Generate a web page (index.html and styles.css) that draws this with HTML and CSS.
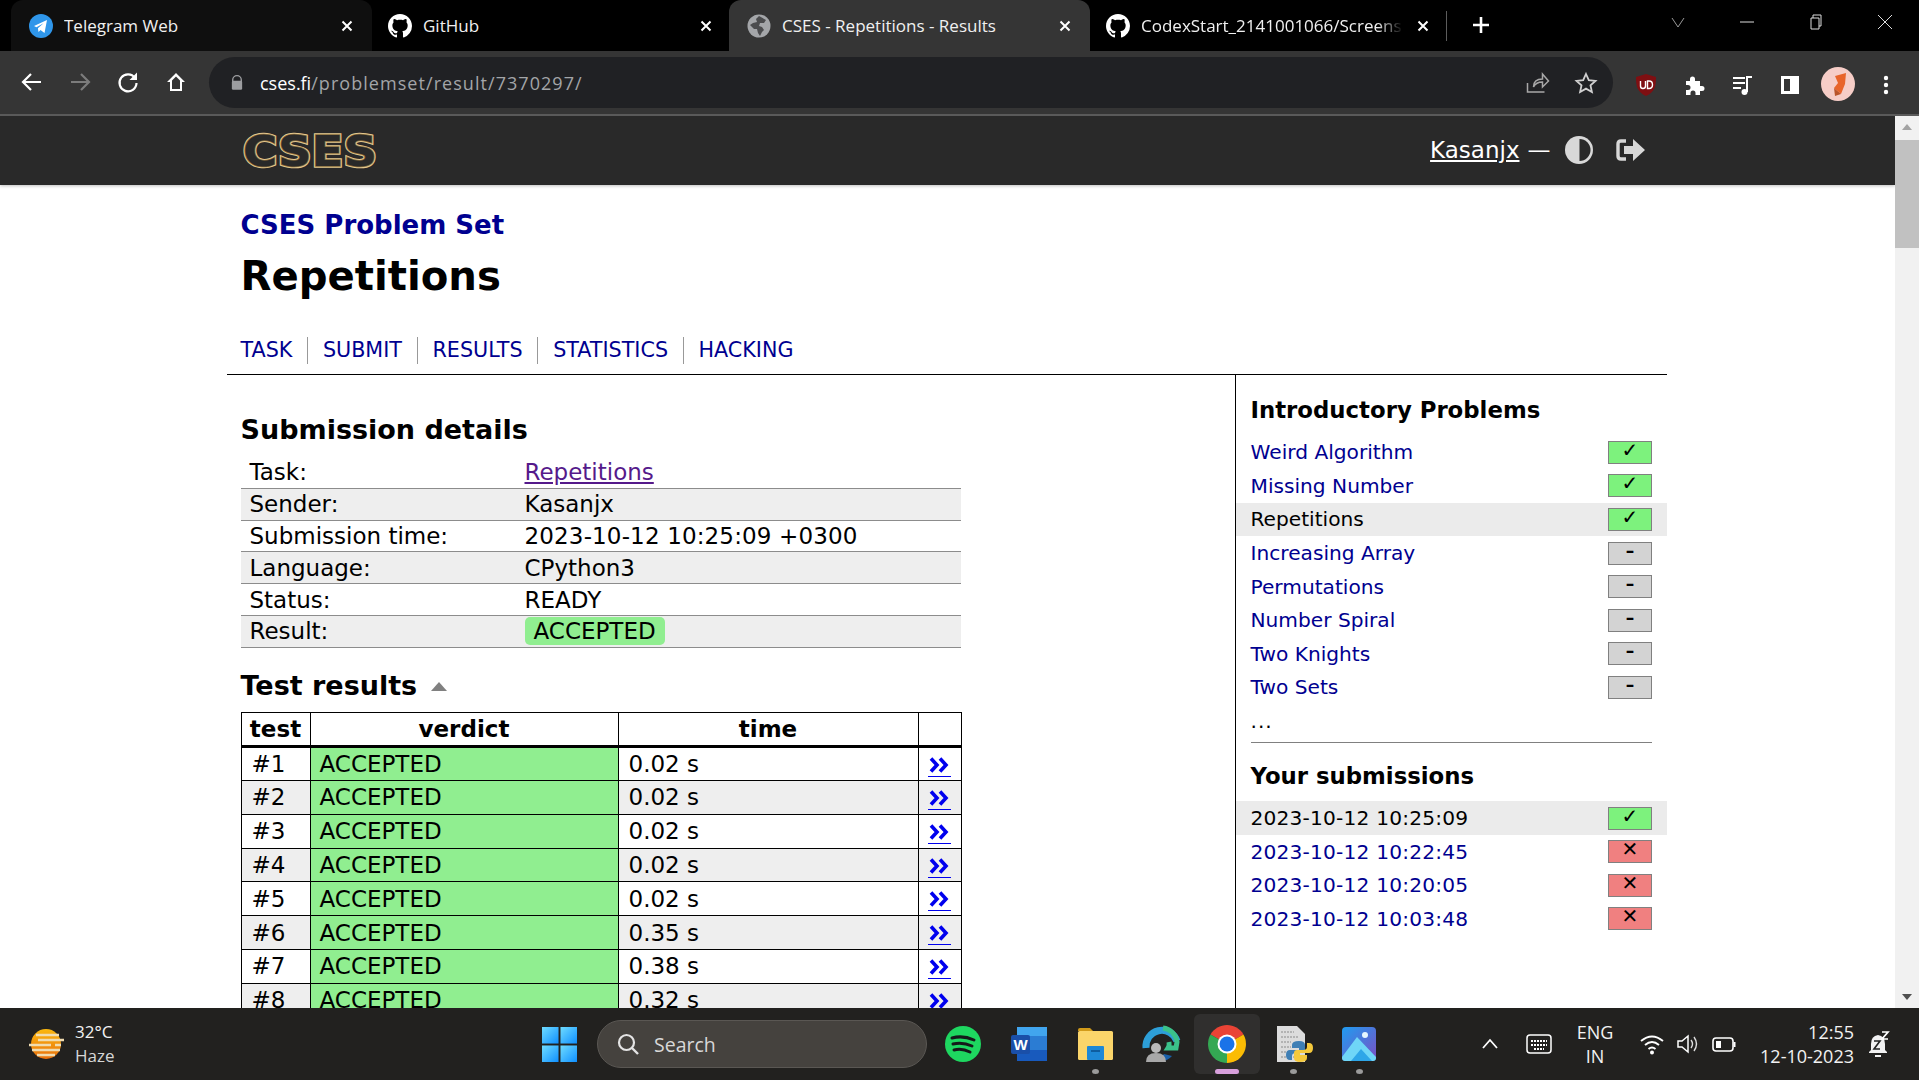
FILE: index.html
```html
<!DOCTYPE html>
<html lang="en">
<head>
    <meta charset="UTF-8">
    <title>CSES - Repetitions - Results</title>
    <link rel="stylesheet" href="styles.css">
</head>
<body>
    <svg class="defs" width="0" height="0">
        <symbol id="github" viewBox="0 0 16 16"><path fill-rule="evenodd" d="M8 0C3.58 0 0 3.58 0 8c0 3.54 2.29 6.53 5.47 7.59.4.07.55-.17.55-.38 0-.19-.01-.82-.01-1.49-2.01.37-2.53-.49-2.69-.94-.09-.23-.48-.94-.82-1.13-.28-.15-.68-.52-.01-.53.63-.01 1.08.58 1.23.82.72 1.21 1.87.87 2.33.66.07-.52.28-.87.51-1.07-1.78-.2-3.64-.89-3.64-3.95 0-.87.31-1.59.82-2.15-.08-.2-.36-1.02.08-2.12 0 0 .67-.21 2.2.82.64-.18 1.32-.27 2-.27.68 0 1.36.09 2 .27 1.53-1.04 2.2-.82 2.2-.82.44 1.1.16 1.92.08 2.12.51.56.82 1.27.82 2.15 0 3.07-1.87 3.75-3.65 3.95.29.25.54.73.54 1.48 0 1.07-.01 1.93-.01 2.2 0 .21.15.46.55.38A8.013 8.013 0 0016 8c0-4.42-3.58-8-8-8z"/></symbol>
        <symbol id="close" viewBox="0 0 12 12"><path d="M1.5 1.5l9 9M10.5 1.5l-9 9" stroke="currentColor" stroke-width="2" fill="none"/></symbol>
        <symbol id="chevrons" viewBox="0 0 23 16"><path d="M3 1.500l6 6.500-6 6.500M12 1.500l6 6.500-6 6.500" stroke="currentColor" stroke-width="3.600" fill="none"/></symbol>
    </svg>

    <div class="tabstrip">
        <div class="tab tab-hover">
            <svg class="favicon" viewBox="0 0 24 24"><circle cx="12" cy="12" r="12" fill="#2f96ea"/><path d="M5 12l13-6-2.5 13-4-3-2 2-.6-3.8 5.6-5-7 4z" fill="#fff"/></svg>
            <span class="tab-title">Telegram Web</span>
            <svg class="tab-close"><use href="#close"/></svg>
        </div>
        <div class="tab tab-second">
            <svg class="favicon favicon-light"><use href="#github"/></svg>
            <span class="tab-title">GitHub</span>
            <svg class="tab-close"><use href="#close"/></svg>
        </div>
        <div class="tab tab-active">
            <svg class="favicon" viewBox="0 0 24 24"><circle cx="12" cy="12" r="11.5" fill="#a4a6a9"/><path d="M12 2l-3 3 1 3-4 1-3 2 4 4 3 0 1 4 2 3 2-4 2-2-2-3-3-1 1-3 4 0 2-3z" fill="#4b4c4e"/></svg>
            <span class="tab-title">CSES - Repetitions - Results</span>
            <svg class="tab-close"><use href="#close"/></svg>
        </div>
        <div class="tab tab-last">
            <svg class="favicon favicon-light"><use href="#github"/></svg>
            <span class="tab-title tab-fade">CodexStart_2141001066/Screens</span>
            <svg class="tab-close"><use href="#close"/></svg>
        </div>
        <div class="tab-sep"></div>
        <svg class="new-tab" viewBox="0 0 18 18"><path d="M9 1v16M1 9h16" stroke="#fff" stroke-width="2.6"/></svg>
        <div class="window-btns">
            <svg viewBox="0 0 16 16"><path d="M2 4l6 9 6-9" stroke="#9a9a9a" fill="none"/></svg>
            <svg viewBox="0 0 16 16"><path d="M1 8h14" stroke="#ddd" fill="none"/></svg>
            <svg viewBox="0 0 16 16"><path d="M3 4h8v11H3zM5 4V1h8v11h-2" stroke="#ddd" fill="none"/></svg>
            <svg viewBox="0 0 16 16"><path d="M1 1l14 14M15 1L1 15" stroke="#ddd" fill="none"/></svg>
        </div>
    </div>

    <div class="toolbar">
        <div class="nav-btns">
            <svg viewBox="0 0 24 24"><path d="M21 12H4M11 4l-8 8 8 8" stroke="#fff" stroke-width="2.2" fill="none"/></svg>
            <svg viewBox="0 0 24 24"><path d="M3 12h17M13 4l8 8-8 8" stroke="#7c7c7c" stroke-width="2.2" fill="none"/></svg>
            <svg viewBox="0 0 24 24"><path d="M19 8a8.5 8.5 0 1 0 1.5 5" stroke="#fff" stroke-width="2.2" fill="none"/><path d="M21 2.5V10h-7.5z" fill="#fff"/></svg>
            <svg viewBox="0 0 24 24"><path d="M12 3L3 12h3v9h12v-9h3zM8 19v-8.500l4-4 4 4V19z" fill="#fff"/></svg>
        </div>
        <div class="omnibox">
            <svg class="lock" viewBox="0 0 14 18"><path d="M2 8V6a5 5 0 0 1 10 0v2" stroke="#9c9da0" stroke-width="1.6" fill="none"/><rect x="1" y="7" width="12" height="10.500" rx="1.500" fill="#9c9da0"/></svg>
            <div class="url"><span class="url-host">cses.fi</span>/problemset/result/7370297/</div>
            <svg class="omni-icon" viewBox="0 0 24 24"><path d="M3 12v9h17M9 16c0-6 4-8 9-8V3l6 7-6 6v-5c-4 0-7 1-9 5z" transform="translate(-1.500 0)" stroke="#a8a8a8" stroke-width="1.500" fill="none"/></svg>
            <svg class="omni-icon" viewBox="0 0 24 24"><path d="M12 3l2.800 6.200 6.700.7-5 4.500 1.400 6.600L12 17.600 6.100 21l1.400-6.600-5-4.500 6.700-.7z" stroke="#d0d0d0" stroke-width="1.800" fill="none"/></svg>
        </div>
        <div class="ext-btns">
            <svg viewBox="0 0 24 24"><path d="M12 1l10 3c0 9-1 15-10 19C3 19 2 13 2 4z" fill="#7f0f12"/><path d="M6.500 8v5q0 2.500 2.500 2.500t2.500-2.500V8M13.500 8v7.500h1.500q3.500 0 3.500-3.750T15 8z" stroke="#fff" stroke-width="1.400" fill="none"/></svg>
            <svg viewBox="0 0 24 24"><path d="M4 8h4V6a2.500 2.500 0 0 1 5 0v2h5v5h2a2.500 2.500 0 0 1 0 5h-2v4h-4.500v-2a2.500 2.500 0 0 0-5 0v2H4v-5h2a2.500 2.500 0 0 0 0-5H4z" fill="#fff"/></svg>
            <svg viewBox="0 0 24 24"><path d="M3 5h12M3 10h12M3 15h8" stroke="#fff" stroke-width="2" fill="none"/><path d="M17 19V4h5" stroke="#fff" stroke-width="2" fill="none"/><circle cx="14.500" cy="19" r="3" fill="#fff"/></svg>
            <svg viewBox="0 0 24 24"><path d="M3 3h18v18H3z" fill="#fff"/><path d="M6 6h6v12H6z" fill="#353535"/></svg>
            <svg class="avatar" viewBox="0 0 34 34"><circle cx="17" cy="17" r="17" fill="#f6cdc7"/><path d="M14 9l11-3-1 11-4 10-7-6 4-5z" fill="#e8642a"/><path d="M13 21l7 6-6 2z" fill="#b9542a"/></svg>
            <svg viewBox="0 0 24 24"><circle cx="12" cy="5" r="2.200" fill="#fff"/><circle cx="12" cy="12" r="2.200" fill="#fff"/><circle cx="12" cy="19" r="2.200" fill="#fff"/></svg>
        </div>
    </div>

    <div class="viewport">
        <div class="page">
            <header class="site-header">
                <div class="header-inner">
                    <svg class="logo" viewBox="0 0 138 50">
                        <text class="logo-text logo-outer" x="2" y="41" textLength="134" lengthAdjust="spacingAndGlyphs">CSES</text>
                        <text class="logo-text logo-shade" x="2" y="41" textLength="134" lengthAdjust="spacingAndGlyphs">CSES</text>
                        <text class="logo-text logo-fill" x="2" y="41" textLength="134" lengthAdjust="spacingAndGlyphs">CSES</text>
                    </svg>
                    <div class="account">
                        <a class="username">Kasanjx</a>
                        <span class="dash">—</span>
                        <svg class="theme-icon" viewBox="0 0 30 30"><circle cx="15" cy="15" r="14" fill="#d8d8d8"/><path d="M15.500 4a11 11 0 0 1 0 22z" fill="#292929"/></svg>
                        <svg class="logout-icon" viewBox="0 0 30 24"><path d="M10 3H5Q2 3 2 6v12q0 3 3 3h5" stroke="#d8d8d8" stroke-width="3.400" fill="none"/><path d="M8 8h9V1l12 11-12 11v-7H8z" fill="#d8d8d8"/></svg>
                    </div>
                </div>
            </header>

            <div class="skeleton">
                <div class="title-block">
                    <h2 class="set-title">CSES Problem Set</h2>
                    <h1>Repetitions</h1>
                    <ul class="nav">
                        <li><a>TASK</a></li>
                        <li><a>SUBMIT</a></li>
                        <li><a>RESULTS</a></li>
                        <li><a>STATISTICS</a></li>
                        <li><a>HACKING</a></li>
                    </ul>
                </div>
                <div class="columns">
                    <main class="content">
                        <h3 class="details-title">Submission details</h3>
                        <table class="details">
                            <tr><td class="details-key">Task:</td><td><a class="visited">Repetitions</a></td></tr>
                            <tr><td class="details-key">Sender:</td><td>Kasanjx</td></tr>
                            <tr><td class="details-key">Submission time:</td><td class="date">2023-10-12 10:25:09 +0300</td></tr>
                            <tr><td class="details-key">Language:</td><td>CPython3</td></tr>
                            <tr><td class="details-key">Status:</td><td>READY</td></tr>
                            <tr><td class="details-key">Result:</td><td><span class="accepted-pill">ACCEPTED</span></td></tr>
                        </table>

                        <h3 class="results-title">Test results <span class="collapse-arrow"></span></h3>
                        <table class="results">
                            <colgroup>
                                <col class="col-test"><col class="col-verdict"><col class="col-time"><col class="col-link">
                            </colgroup>
                            <thead>
                                <tr><th>test</th><th>verdict</th><th>time</th><th></th></tr>
                            </thead>
                            <tbody>
                                <tr><td>#1</td><td class="verdict">ACCEPTED</td><td>0.02 s</td><td class="more"><a><svg><use href="#chevrons"/></svg></a></td></tr>
                                <tr><td>#2</td><td class="verdict">ACCEPTED</td><td>0.02 s</td><td class="more"><a><svg><use href="#chevrons"/></svg></a></td></tr>
                                <tr><td>#3</td><td class="verdict">ACCEPTED</td><td>0.02 s</td><td class="more"><a><svg><use href="#chevrons"/></svg></a></td></tr>
                                <tr><td>#4</td><td class="verdict">ACCEPTED</td><td>0.02 s</td><td class="more"><a><svg><use href="#chevrons"/></svg></a></td></tr>
                                <tr><td>#5</td><td class="verdict">ACCEPTED</td><td>0.02 s</td><td class="more"><a><svg><use href="#chevrons"/></svg></a></td></tr>
                                <tr><td>#6</td><td class="verdict">ACCEPTED</td><td>0.35 s</td><td class="more"><a><svg><use href="#chevrons"/></svg></a></td></tr>
                                <tr><td>#7</td><td class="verdict">ACCEPTED</td><td>0.38 s</td><td class="more"><a><svg><use href="#chevrons"/></svg></a></td></tr>
                                <tr><td>#8</td><td class="verdict">ACCEPTED</td><td>0.32 s</td><td class="more"><a><svg><use href="#chevrons"/></svg></a></td></tr>
                            </tbody>
                        </table>
                    </main>

                    <aside class="sidebar">
                        <h4>Introductory Problems</h4>
                        <ul class="task-list">
                            <li><a>Weird Algorithm</a><span class="badge badge-ok">✓</span></li>
                            <li><a>Missing Number</a><span class="badge badge-ok">✓</span></li>
                            <li class="current">Repetitions<span class="badge badge-ok">✓</span></li>
                            <li><a>Increasing Array</a><span class="badge badge-none">–</span></li>
                            <li><a>Permutations</a><span class="badge badge-none">–</span></li>
                            <li><a>Number Spiral</a><span class="badge badge-none">–</span></li>
                            <li><a>Two Knights</a><span class="badge badge-none">–</span></li>
                            <li><a>Two Sets</a><span class="badge badge-none">–</span></li>
                            <li class="more-tasks">...</li>
                        </ul>
                        <hr>
                        <h4 class="subs-title">Your submissions</h4>
                        <ul class="task-list date-list">
                            <li class="current">2023-10-12 10:25:09<span class="badge badge-ok">✓</span></li>
                            <li><a>2023-10-12 10:22:45</a><span class="badge badge-fail">✕</span></li>
                            <li><a>2023-10-12 10:20:05</a><span class="badge badge-fail">✕</span></li>
                            <li><a>2023-10-12 10:03:48</a><span class="badge badge-fail">✕</span></li>
                        </ul>
                    </aside>
                </div>
            </div>
        </div>
        <div class="scrollbar">
            <span class="scroll-up"></span>
            <div class="scroll-thumb"></div>
            <span class="scroll-down"></span>
        </div>
    </div>

    <footer class="taskbar">
        <div class="weather">
            <svg class="weather-icon" viewBox="0 0 38 32">
                <defs>
                    <linearGradient id="sun" x1="0" y1="0" x2="0" y2="1">
                        <stop offset="0" stop-color="#fbb80f"/>
                        <stop offset="1" stop-color="#e9700c"/>
                    </linearGradient>
                </defs>
                <circle cx="19" cy="16" r="15" fill="url(#sun)"/><path d="M9 7h23M11 12h26M2 17h22M28 17h6M5 22h28M10 27h18" stroke="#f0dcb0" stroke-width="2.400"/>
            </svg>
            <div class="weather-text"><span>32°C</span><span class="weather-desc">Haze</span></div>
        </div>
        <div class="task-center">
            <svg class="start" viewBox="0 0 36 36">
                <defs>
                    <linearGradient id="win" x1="0" y1="0" x2="1" y2="1">
                        <stop offset="0" stop-color="#6fdcff"/>
                        <stop offset="1" stop-color="#0f8fff"/>
                    </linearGradient>
                </defs>
                <rect x="0" y="0" width="17" height="17" fill="url(#win)"/><rect x="19" y="0" width="17" height="17" fill="url(#win)"/><rect x="0" y="19" width="17" height="17" fill="url(#win)"/><rect x="19" y="19" width="17" height="17" fill="url(#win)"/>
            </svg>
            <div class="search">
                <svg viewBox="0 0 24 24"><circle cx="10.500" cy="10.500" r="7.500" stroke="#e4e4e4" stroke-width="2.200" fill="none"/><path d="M16 16l6 6" stroke="#e4e4e4" stroke-width="2.400"/></svg>
                <span>Search</span>
            </div>
            <div class="app">
                <svg viewBox="0 0 40 40"><circle cx="20" cy="20" r="18" fill="#1ed760"/><path d="M9 14q11-3 22 2M10 20q10-2 19 2M11 26q8-2 16 2" stroke="#15191a" stroke-width="3" fill="none" stroke-linecap="round"/></svg>
            </div>
            <div class="app">
                <svg viewBox="0 0 40 40"><rect x="8" y="3" width="30" height="34" rx="2" fill="#2b7cd3"/><rect x="8" y="3" width="30" height="9" fill="#41a5ee"/><rect x="8" y="26" width="30" height="11" fill="#185abd"/><rect x="2" y="11" width="19" height="19" rx="2" fill="#1a4fa8"/><text class="word-w" x="11.500" y="26" text-anchor="middle">W</text></svg>
            </div>
            <div class="app app-open">
                <svg viewBox="0 0 40 40"><path d="M3 6q0-2 2-2h10l3 3H3z" fill="#d29b1a"/><rect x="3" y="7" width="35" height="29" rx="1.500" fill="#fbd56a"/><rect x="12" y="22" width="17" height="14" rx="1" fill="#1e88d6"/><path d="M16 27h9" stroke="#0e5d9f" stroke-width="2"/></svg>
            </div>
            <div class="app">
                <svg viewBox="0 0 40 40"><path d="M5 24A16 16 0 0 1 36 17" stroke="#2d9fd8" stroke-width="7" fill="none"/><path d="M22 4a16 16 0 0 1 14 14l-1 6-8 0a8 8 0 0 0 1-6" stroke="#3bc28a" stroke-width="5" fill="none"/><path d="M16 37a16 16 0 0 0 15-5l-8-2z" fill="#1a5fa8"/><circle cx="15" cy="24" r="5" fill="#b9b9b9"/><path d="M5 38q0-9 10-9t10 9z" fill="#a8a8a8"/></svg>
            </div>
            <div class="app app-active">
                <svg viewBox="0 0 40 40"><path d="M20 20L3.550 10.500A19 19 0 0 1 36.450 10.500Z" fill="#ea4335"/><path d="M20 20L36.450 10.500A19 19 0 0 1 20 39Z" fill="#fbbc04"/><path d="M20 20L20 39A19 19 0 0 1 3.550 10.500Z" fill="#34a853"/><circle cx="20" cy="20" r="9.500" fill="#fff"/><circle cx="20" cy="20" r="7.500" fill="#1a73e8"/></svg>
            </div>
            <div class="app app-open">
                <svg viewBox="0 0 40 40"><path d="M4 2h20l8 8v28H4z" fill="#dcdcdc"/><path d="M8 8h13M8 13h17M8 18h10M8 23h10M8 28h10M8 33h14" stroke="#8a8a8a" stroke-dasharray="2 1"/><path d="M26 17q-7 0-7 4v3h7v2h-9q-4 0-4 5t4 5h2v-4q0-3 4-3h6q3 0 3-3v-5q0-4-6-4z" fill="#3f7fb5"/><path d="M27 38q7 0 7-4v-3h-7v-2h9q4 0 4-5t-4-5h-2v4q0 3-4 3h-6q-3 0-3 3v5q0 4 6 4z" fill="#f5c93c"/></svg>
            </div>
            <div class="app app-open">
                <svg viewBox="0 0 40 40"><defs><linearGradient id="photos" x1="0" y1="0" x2="1" y2="1"><stop offset="0" stop-color="#1f9cf0"/><stop offset="1" stop-color="#7c4fc4"/></linearGradient></defs><rect x="3" y="3" width="34" height="34" rx="4" fill="url(#photos)"/><path d="M3 33L18 13l19 20v1q0 3-3 3H6q-3 0-3-3z" fill="#6fd6f7"/><path d="M12 37l10-12 11 12z" fill="#2ea6e8"/><circle cx="26" cy="11" r="3" fill="#e6f7ff"/></svg>
            </div>
        </div>
        <div class="tray">
            <svg class="tray-caret" viewBox="0 0 18 12"><path d="M2 10l7-8 7 8" stroke="#fff" stroke-width="1.800" fill="none"/></svg>
            <svg class="tray-kbd" viewBox="0 0 26 20"><rect x="1" y="1" width="24" height="18" rx="3" stroke="#fff" stroke-width="1.500" fill="none"/><path d="M5 7h16M5 11h16M8 15h10" stroke="#fff" stroke-width="1.800" stroke-dasharray="2 1"/></svg>
            <div class="lang"><span>ENG</span><span>IN</span></div>
            <svg class="tray-icon" viewBox="0 0 24 24"><path d="M1 9q11-9 22 0M5 13q7-6 14 0M8.500 17q3.500-3 7 0" stroke="#fff" stroke-width="1.900" fill="none"/><circle cx="12" cy="20.500" r="2" fill="#fff"/></svg>
            <svg class="tray-icon" viewBox="0 0 24 24"><path d="M2 9h4l6-5v16l-6-5H2z" stroke="#fff" stroke-width="1.500" fill="none"/><path d="M15 8q3 4 0 8M18 5q5 7 0 14" stroke="#ddd" stroke-width="1.400" fill="none"/></svg>
            <svg class="tray-icon" viewBox="0 0 24 24"><rect x="1" y="6" width="20" height="13" rx="3" stroke="#fff" stroke-width="1.600" fill="none"/><rect x="4" y="9" width="5" height="7" fill="#fff"/><rect x="21.500" y="10" width="2" height="5" fill="#fff"/></svg>
            <div class="clock"><span>12:55</span><span>12-10-2023</span></div>
            <svg class="tray-bell" viewBox="0 0 24 28"><path d="M12 5q-7 1-7 9v6l-2 2v1h18v-1l-2-2v-6q0-8-7-9z" fill="#f2f2f2"/><path d="M9 25h6v2H9z" fill="#f2f2f2"/><path d="M8 11h6l-6 8h6" stroke="#222" stroke-width="1.600" fill="none"/><path d="M16 2h6l-6 7h6" stroke="#fff" stroke-width="1.700" fill="none"/></svg>
        </div>
    </footer>
</body>
</html>
```

FILE: styles.css
```css
/* General */
* {
    box-sizing: border-box;
}

html, body {
    margin: 0;
    height: 1080px;
    overflow: hidden;
}

body {
    display: flex;
    flex-direction: column;
    font-family: "DejaVu Sans", Verdana, sans-serif;
    font-size: 23px;
    color: #000;
    background-color: #fff;
}

.defs {
    position: absolute;
}

a {
    color: #000090;
}

/* Browser tabs */
.tabstrip {
    height: 51px;
    flex-shrink: 0;
    display: flex;
    align-items: stretch;
    padding-left: 11px;
    background-color: #000;
    font-family: "Open Sans", sans-serif;
    font-size: 17px;
    color: #f0f0f0;
}

.tab {
    width: 357px;
    display: flex;
    align-items: center;
    padding: 0 17px 0 18px;
    border-radius: 12px 12px 0 0;
}

.tab-hover {
    width: 361px;
    padding-right: 19px;
    background-color: #0f0f0f;
}

.tab-second {
    padding-left: 16px;
}

.tab-active {
    width: 361px;
    padding-right: 19px;
    background-color: #353535;
}

.tab-last {
    width: 356px;
    padding-left: 16px;
}

.favicon {
    width: 24px;
    height: 24px;
    flex-shrink: 0;
    margin-right: 11px;
}

.favicon-light {
    fill: #fff;
}

.tab-title {
    flex: 1;
    overflow: hidden;
    white-space: nowrap;
}

.tab-fade {
    -webkit-mask-image: linear-gradient(to right, #000 90%, transparent);
    mask-image: linear-gradient(to right, #000 90%, transparent);
}

.tab-close {
    width: 12px;
    height: 12px;
    margin-left: 14px;
    flex-shrink: 0;
    color: #fff;
}

.tab-sep {
    width: 1px;
    height: 30px;
    margin: 11px 0 0 0;
    background-color: #5c5c5c;
}

.new-tab {
    width: 18px;
    height: 18px;
    margin: 16px 0 0 25px;
}

.window-btns {
    margin-left: auto;
    display: flex;
    gap: 53px;
    padding: 14px 26px 0 0;
}

.window-btns svg {
    width: 16px;
    height: 16px;
}

/* Browser toolbar */
.toolbar {
    height: 65px;
    flex-shrink: 0;
    display: flex;
    align-items: flex-start;
    background-color: #353535;
    border-bottom: 2px solid #5a5a5a;
}

.nav-btns {
    display: flex;
    gap: 24px;
    padding: 19px 0 0 20px;
    width: 209px;
}

.nav-btns svg {
    width: 24px;
    height: 24px;
}

.omnibox {
    width: 1404px;
    height: 51px;
    margin-top: 6px;
    display: flex;
    align-items: center;
    padding: 0 15px 0 22px;
    border-radius: 26px;
    background-color: #202124;
    font-family: "Open Sans", sans-serif;
    font-size: 18px;
    letter-spacing: 1.05px;
    color: #a3a5a8;
}

.lock {
    width: 12px;
    height: 17px;
    margin-right: 17px;
}

.url {
    flex: 1;
}

.url-host {
    color: #fff;
    letter-spacing: 0;
}

.omni-icon {
    width: 24px;
    height: 24px;
    margin-left: 24px;
}

.ext-btns {
    display: flex;
    align-items: center;
    gap: 24px;
    padding: 18px 0 0 21px;
}

.ext-btns svg {
    width: 24px;
    height: 24px;
}

.ext-btns .avatar {
    width: 34px;
    height: 34px;
    margin: -2px -5px 0;
}

/* Page */
.viewport {
    flex: 1;
    min-height: 0;
    display: flex;
}

.page {
    flex: 1;
    overflow: hidden;
    background-color: #fff;
}

.site-header {
    height: 69px;
    background-color: #292929;
    box-shadow: 0 1px 3px rgba(0, 0, 0, 0.25);
}

.header-inner {
    width: 1440px;
    height: 100%;
    margin-left: 226.500px;
    padding: 0 21px 0 14px;
    display: flex;
    align-items: center;
    justify-content: space-between;
}

.logo {
    width: 138px;
    height: 50px;
    margin-top: -2px;
}

.logo-text {
    font-family: "DejaVu Sans", sans-serif;
    font-weight: bold;
    font-size: 43px;
}

.logo-outer {
    fill: none;
    stroke: #e3c88e;
    stroke-width: 3.5;
}

.logo-shade {
    fill: none;
    stroke: #8a6c3c;
    stroke-width: 1.5;
}

.logo-fill {
    fill: #292929;
}

.account {
    display: flex;
    align-items: center;
    margin-top: -2px;
    color: #fff;
}

.username {
    color: #fff;
    text-decoration: underline;
}

.dash {
    margin: 0 8px;
}

.theme-icon {
    width: 30px;
    height: 30px;
    margin-left: 5px;
}

.logout-icon {
    width: 30px;
    height: 24px;
    margin-left: 22px;
}

.skeleton {
    width: 1440px;
    margin-left: 226.500px;
}

.title-block {
    padding: 23.500px 14px 0;
    height: 190px;
    border-bottom: 1px solid #000;
}

.set-title {
    margin: 0;
    font-size: 26px;
    line-height: 32px;
    color: #000090;
}

h1 {
    margin: 10.500px 0 0;
    font-size: 40.200px;
    line-height: 50px;
}

.nav {
    list-style: none;
    display: flex;
    margin: 36px 0 0;
    padding: 0;
    font-size: 20.700px;
    line-height: 27px;
}

.nav li {
    padding: 0 14.750px;
    border-left: 1px solid #999;
}

.nav li:first-child {
    padding-left: 0;
    border-left: none;
}

.columns {
    display: flex;
}

.content {
    width: 1008px;
    padding: 0 14px;
}

h3 {
    margin: 0;
    font-size: 27px;
    line-height: 34px;
}

.details-title {
    margin-top: 37.500px;
}

.details {
    width: 720px;
    margin-top: 10px;
    border-collapse: collapse;
}

.details td {
    height: 31.800px;
    padding: 0 9px;
    border-bottom: 1.500px solid #8c8c8c;
    line-height: 28px;
}

.details-key {
    width: 284px;
}

.details td:nth-child(2) {
    padding-left: 0;
}

.details .date {
    letter-spacing: 0.15px;
}

.details tr:nth-child(even) {
    background-color: #eee;
}

.visited {
    color: #551a8b;
    text-decoration: underline;
}

.accepted-pill {
    display: inline-block;
    padding: 0 9px;
    border-radius: 5px;
    background-color: #90ee90;
}

.results-title {
    margin-top: 21.500px;
}

.collapse-arrow {
    display: inline-block;
    margin-left: 4px;
    vertical-align: 4px;
    border-left: 8.500px solid transparent;
    border-right: 8.500px solid transparent;
    border-bottom: 9px solid #808080;
}

.results {
    width: 720px;
    margin-top: 9px;
    border-collapse: collapse;
    table-layout: fixed;
    border: 1px solid #000;
}

.col-test { width: 69px; }
.col-verdict { width: 308px; }
.col-time { width: 300px; }
.col-link { width: 43px; }

.results th {
    height: 34px;
    padding: 0;
    border: 1px solid #000;
    border-bottom: 3px solid #000;
    line-height: 30px;
}

.results td {
    height: 33.800px;
    padding: 0 10px;
    border: 1px solid #000;
    line-height: 30px;
}

.results tbody tr:nth-child(even) {
    background-color: #eee;
}

.results td.verdict {
    padding-left: 9px;
    background-color: #90ee90;
}

.results td.more {
    padding: 0;
}

.more a {
    display: block;
    width: 23px;
    margin: 0 auto;
    padding: 5px 0 3px;
    border-bottom: 1px solid #0000ee;
    line-height: 0;
    color: #0000ee;
}

.more svg {
    display: block;
    width: 23px;
    height: 16px;
}

/* Sidebar */
.sidebar {
    width: 432px;
    min-height: 700px;
    padding: 16.500px 14.500px 0 15px;
    border-left: 1px solid #000;
    font-size: 20.160px;
}

h4 {
    margin: 0;
    font-size: 22.800px;
    line-height: 36px;
}

.task-list {
    list-style: none;
    margin: 8px 0 0;
    padding: 0;
}

.task-list li {
    height: 33.600px;
    display: flex;
    align-items: center;
    justify-content: space-between;
    line-height: 28px;
}

.task-list a {
    color: #000090;
}

.date-list {
    margin-top: 7px;
}

.date-list li {
    letter-spacing: 0.2px;
}

.task-list .current {
    margin: 0 -14.500px 0 -15px;
    padding: 0 14.500px 0 15px;
    background-color: #ebebeb;
}

.more-tasks {
    letter-spacing: 1px;
}

.badge {
    width: 44px;
    height: 23px;
    border: 1.500px solid #808080;
    text-align: center;
    font-size: 20px;
    line-height: 16px;
}

.badge-ok {
    background-color: #7df27d;
}

.badge-none {
    background-color: #d3d3d3;
    font-size: 17px;
    font-weight: bold;
}

.badge-fail {
    background-color: #f08080;
}

hr {
    margin: 4.500px 0 0;
    border: none;
    border-top: 1.500px solid #808080;
}

.subs-title {
    margin-top: 15px;
}

/* Scrollbar */
.scrollbar {
    width: 24px;
    position: relative;
    background-color: #f1f1f1;
}

.scroll-up, .scroll-down {
    position: absolute;
    left: 7px;
    border-left: 5px solid transparent;
    border-right: 5px solid transparent;
}

.scroll-up {
    top: 8px;
    border-bottom: 6px solid #a3a3a3;
}

.scroll-down {
    bottom: 8px;
    border-top: 6px solid #505050;
}

.scroll-thumb {
    height: 108px;
    margin-top: 24px;
    background-color: #c1c1c1;
}

/* Windows taskbar */
.taskbar {
    height: 72px;
    flex-shrink: 0;
    display: flex;
    align-items: center;
    background-color: #22211f;
    font-family: "Open Sans", sans-serif;
    color: #f2f2f2;
}

.weather {
    width: 542px;
    display: flex;
    align-items: center;
    padding-left: 27px;
}

.weather-icon {
    width: 38px;
    height: 32px;
}

.weather-text {
    display: flex;
    flex-direction: column;
    margin-left: 10px;
    font-size: 17px;
    line-height: 24px;
}

.weather-desc {
    color: #d6d6d6;
}

.task-center {
    display: flex;
    align-items: center;
}

.start {
    width: 35px;
    height: 35px;
}

.search {
    width: 330px;
    height: 48px;
    margin: 0 3px 0 20px;
    display: flex;
    align-items: center;
    padding-left: 18px;
    border-radius: 24px;
    border: 1px solid #5a5753;
    background-color: #45423e;
    font-size: 19.500px;
    color: #d8d8d8;
}

.search svg {
    width: 24px;
    height: 24px;
    margin-right: 14px;
}

.app {
    width: 66px;
    height: 60px;
    position: relative;
    display: flex;
    align-items: center;
    justify-content: center;
}

.app svg {
    width: 40px;
    height: 40px;
}

.word-w {
    font-family: "Liberation Sans", sans-serif;
    font-weight: bold;
    font-size: 15px;
    fill: #fff;
}

.app-open::after {
    content: "";
    position: absolute;
    left: 30px;
    bottom: 0;
    width: 7px;
    height: 5px;
    border-radius: 50%;
    background-color: #9b9b9b;
}

.app-active {
    border-radius: 6px;
    background-color: #302f2e;
}

.app-active::after {
    content: "";
    position: absolute;
    left: 21px;
    bottom: 0;
    width: 24px;
    height: 5px;
    border-radius: 3px;
    background-color: #d8a0dc;
}

.tray {
    margin-left: auto;
    display: flex;
    align-items: center;
    padding-right: 29px;
    font-size: 18px;
}

.tray-caret {
    width: 18px;
    height: 12px;
}

.tray-kbd {
    width: 26px;
    height: 20px;
    margin: 0 20px 0 27px;
}

.lang {
    width: 46px;
    display: flex;
    flex-direction: column;
    align-items: center;
    line-height: 24px;
}

.tray-icon {
    width: 24px;
    height: 24px;
    margin-left: 12px;
}

.lang + .tray-icon {
    margin-left: 22px;
}

.clock {
    width: 118px;
    display: flex;
    flex-direction: column;
    align-items: flex-end;
    line-height: 24px;
    white-space: nowrap;
}

.tray-bell {
    width: 24px;
    height: 28px;
    margin-left: 12px;
}
```
